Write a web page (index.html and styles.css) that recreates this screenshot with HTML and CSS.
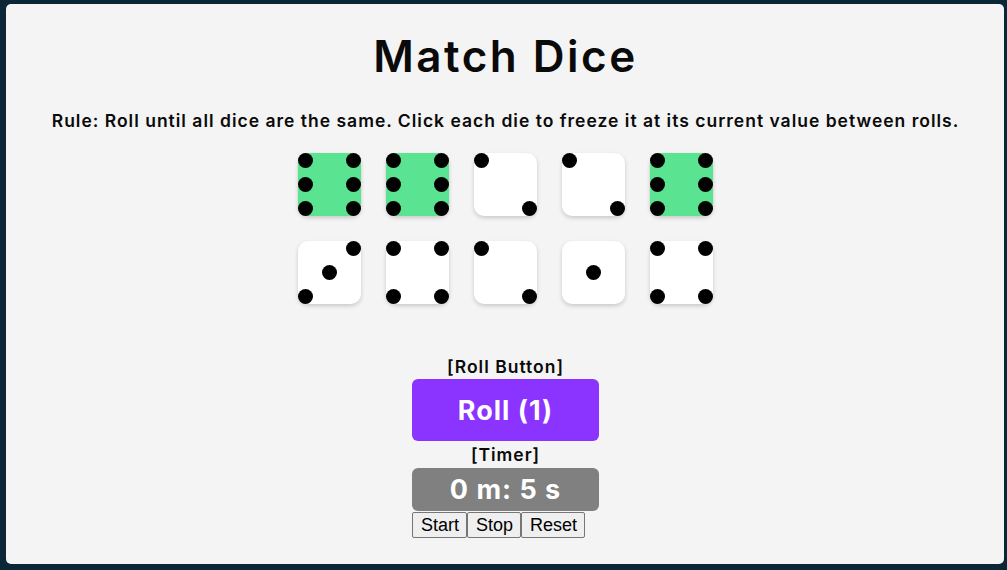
FILE: index.html
```html
<!DOCTYPE html>
<html lang="en">
<head>
<meta charset="utf-8">
<title>Match Dice</title>
<link rel="stylesheet" href="styles.css">
</head>
<body>
<main class="card">
  <h1 class="title">Match Dice</h1>
  <p class="rule">Rule: Roll until all dice are the same. Click each die to freeze it at its current value between rolls.</p>
  <div class="board">
    <div class="die frozen"><span class="pip r1 c1"></span><span class="pip r1 c3"></span><span class="pip r2 c1"></span><span class="pip r2 c3"></span><span class="pip r3 c1"></span><span class="pip r3 c3"></span></div>
    <div class="die frozen"><span class="pip r1 c1"></span><span class="pip r1 c3"></span><span class="pip r2 c1"></span><span class="pip r2 c3"></span><span class="pip r3 c1"></span><span class="pip r3 c3"></span></div>
    <div class="die"><span class="pip r1 c1"></span><span class="pip r3 c3"></span></div>
    <div class="die"><span class="pip r1 c1"></span><span class="pip r3 c3"></span></div>
    <div class="die frozen"><span class="pip r1 c1"></span><span class="pip r1 c3"></span><span class="pip r2 c1"></span><span class="pip r2 c3"></span><span class="pip r3 c1"></span><span class="pip r3 c3"></span></div>
    <div class="die"><span class="pip r1 c3"></span><span class="pip r2 c2"></span><span class="pip r3 c1"></span></div>
    <div class="die"><span class="pip r1 c1"></span><span class="pip r1 c3"></span><span class="pip r3 c1"></span><span class="pip r3 c3"></span></div>
    <div class="die"><span class="pip r1 c1"></span><span class="pip r3 c3"></span></div>
    <div class="die"><span class="pip r2 c2"></span></div>
    <div class="die"><span class="pip r1 c1"></span><span class="pip r1 c3"></span><span class="pip r3 c1"></span><span class="pip r3 c3"></span></div>
  </div>
  <section class="controls">
    <div class="label">[Roll Button]</div>
    <button class="roll">Roll (1)</button>
    <div class="label label-timer">[Timer]</div>
    <div class="timer">0 m: 5 s</div>
    <div class="timer-buttons">
      <button class="tbtn">Start</button><button class="tbtn">Stop</button><button class="tbtn">Reset</button>
    </div>
  </section>
</main>
</body>
</html>
```

FILE: styles.css
```css
html, body {
  margin: 0;
  padding: 0;
}
body {
  background: #0b2637;
  padding: 4px 3px 6px 6px;
  height: 570px;
  box-sizing: border-box;
  font-family: Inter, "Open Sans", sans-serif;
  color: #0a0a0a;
}
.card {
  background: #f4f4f4;
  border-radius: 5px;
  height: 560px;
  display: flex;
  flex-direction: column;
  align-items: center;
  padding-top: 28px;
  padding-left: 1px;
  box-sizing: border-box;
}
.title {
  margin: 0;
  font-size: 44px;
  line-height: 48px;
  font-weight: 600;
  letter-spacing: 2.5px;
}
.rule {
  margin: 30px 0 0;
  font-size: 17.5px;
  line-height: 22px;
  font-weight: 600;
  letter-spacing: 1px;
}
.board {
  margin-top: 21px;
  display: grid;
  grid-template-columns: repeat(5, 63px);
  grid-auto-rows: 63px;
  gap: 25px;
}
.die {
  background: #fff;
  border-radius: 10px;
  box-shadow: 0 2px 4px rgba(0, 0, 0, 0.18);
  display: grid;
  grid-template-columns: repeat(3, 15px);
  grid-template-rows: repeat(3, 15px);
  justify-content: space-between;
  align-content: space-between;
}
.die.frozen {
  background: #5ae390;
}
.pip {
  width: 15px;
  height: 15px;
  border-radius: 50%;
  background: #000;
}
.r1 { grid-row: 1; }
.r2 { grid-row: 2; }
.r3 { grid-row: 3; }
.c1 { grid-column: 1; }
.c2 { grid-column: 2; }
.c3 { grid-column: 3; }
.controls {
  margin-top: 51px;
  width: 187px;
  display: flex;
  flex-direction: column;
  align-items: center;
}
.label {
  font-size: 17.5px;
  line-height: 24px;
  font-weight: 600;
  letter-spacing: 1px;
  white-space: nowrap;
}
.label-timer {
  margin-top: 2px;
}
.roll {
  width: 187px;
  height: 62px;
  border: none;
  border-radius: 6px;
  background: #8b34ff;
  color: #fff;
  font-family: Inter, "Open Sans", sans-serif;
  font-size: 27px;
  font-weight: 700;
  letter-spacing: 1px;
  padding: 0;
}
.timer {
  margin-top: 1px;
  width: 187px;
  height: 43px;
  border-radius: 6px;
  background: #808080;
  color: #fff;
  font-size: 27px;
  font-weight: 700;
  letter-spacing: 1px;
  display: flex;
  align-items: center;
  justify-content: center;
}
.timer-buttons {
  align-self: stretch;
  display: flex;
  margin-top: 1px;
}
.tbtn {
  font-family: "Liberation Sans", Arial, sans-serif;
  font-size: 18px;
  padding: 1px 7px 1px 8px;
  border: 1px solid #767676;
  border-radius: 2px;
  background: #efefef;
  color: #000;
  height: 26px;
  line-height: 20px;
}
```
